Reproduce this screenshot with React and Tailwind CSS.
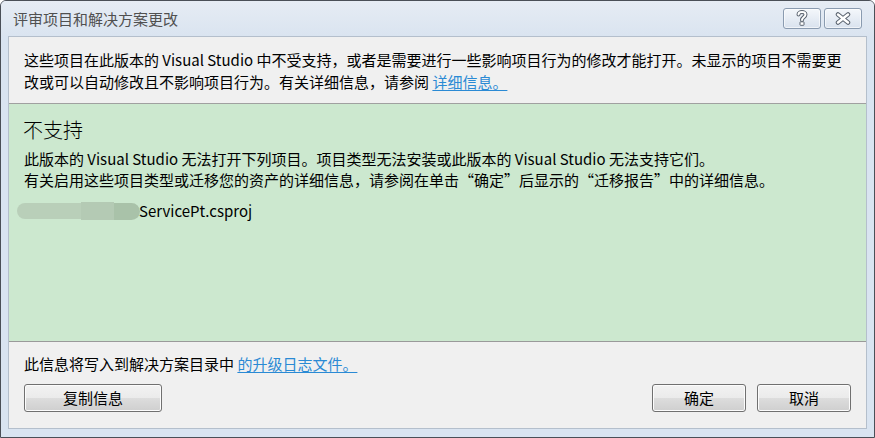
import { useState } from 'react';

const font = { fontFamily: '"Noto Sans CJK SC", "Noto Sans", sans-serif' };

function CaptionButton({ children }) {
  return (
    <div className="w-[38px] h-[21px] rounded-[3px] border border-[#8a9bb0] bg-gradient-to-b from-[#f4f7fb] to-[#d9e2ee] flex items-center justify-center shadow-[inset_0_0_0_1px_rgba(255,255,255,0.6)]">
      {children}
    </div>
  );
}

function WinButton({ label, className = '' }) {
  return (
    <button
      className={`h-[28px] rounded-[3px] border border-[#707070] text-[15px] text-black bg-[linear-gradient(#f2f2f2_0%,#ebebeb_50%,#dddddd_50%,#cfcfcf_100%)] shadow-[inset_0_0_0_1px_#fcfcfc] ${className}`}
      style={font}
    >
      {label}
    </button>
  );
}

export default function App() {
  const [copied, setCopied] = useState(false);

  return (
    <div className="w-[875px] h-[438px] bg-white" style={font} lang="zh-CN">
      <div className="w-full h-full flex flex-col rounded-t-[6px] border border-[#4a4f57] bg-[#d9e4f1] overflow-hidden">
        {/* title bar */}
        <div className="h-[35px] shrink-0 flex items-center justify-between pl-[12px] pr-[10px] bg-gradient-to-b from-[#e6ecf4] to-[#dae4f0]">
          <span className="text-[15px] text-[#505050] leading-none">评审项目和解决方案更改</span>
          <div className="flex gap-[3px] mt-[-1px] mr-[2px]">
            <CaptionButton>
              <svg width="12" height="16" viewBox="0 0 12 16">
                <path d="M2.5 4.5 C2.5 1.2 9.5 1.2 9.5 4.5 C9.5 7.2 6 7.2 6 10" fill="none" stroke="#5b6470" strokeWidth="4" strokeLinecap="round" />
                <path d="M2.5 4.5 C2.5 1.2 9.5 1.2 9.5 4.5 C9.5 7.2 6 7.2 6 10" fill="none" stroke="#fff" strokeWidth="2" strokeLinecap="round" />
                <rect x="4" y="11.8" width="4" height="3.5" rx="0.5" fill="#fff" stroke="#5b6470" strokeWidth="1" />
              </svg>
            </CaptionButton>
            <CaptionButton>
              <svg width="16" height="13" viewBox="0 0 16 13">
                <path d="M3 2.5 L13 10.5 M13 2.5 L3 10.5" stroke="#5b6470" strokeWidth="4.5" strokeLinecap="round" />
                <path d="M3 2.5 L13 10.5 M13 2.5 L3 10.5" stroke="#fff" strokeWidth="2.5" strokeLinecap="round" />
              </svg>
            </CaptionButton>
          </div>
        </div>

        {/* client area */}
        <div className="flex-1 flex flex-col mx-[7px] mb-[8px] border border-[#b4bfcc] bg-[#f0f0f0]">
          <div className="px-[15px] pt-[12px] pb-[10px] text-[15px] leading-[22px] text-black border-b border-[#a0a0a0]">
            <p>这些项目在此版本的 Visual Studio 中不受支持，或者是需要进行一些影响项目行为的修改才能打开。未显示的项目不需要更</p>
            <p>
              改或可以自动修改且不影响项目行为。有关详细信息，请参阅{' '}
              <a href="#" className="text-[#2a8ad4] underline underline-offset-2">详细信息。</a>
            </p>
          </div>

          <div className="flex-1 bg-[#cce8cf] px-[14px] pt-[12px] border-b border-[#9a9a9a]">
            <h2 className="text-[20px] leading-[28px] font-light text-black">不支持</h2>
            <div className="mt-[4px] px-[1px] text-[15px] leading-[21px] text-black">
              <p>此版本的 Visual Studio 无法打开下列项目。项目类型无法安装或此版本的 Visual Studio 无法支持它们。</p>
              <p>有关启用这些项目类型或迁移您的资产的详细信息，请参阅在单击“确定”后显示的“迁移报告”中的详细信息。</p>
            </div>
            <div className="mt-[10px] flex items-center h-[22px] text-[15px] text-black">
              <div className="flex items-center -ml-[6px] blur-[0.6px]">
                <div className="w-[64px] h-[16px] rounded-l-full bg-[#b9cfb9]" />
                <div className="w-[33px] h-[18px] bg-[#b4cab4]" />
                <div className="w-[26px] h-[17px] rounded-r-full bg-[#a9c2a9]" />
              </div>
              <span className="-ml-[1px]">ServicePt.csproj</span>
            </div>
          </div>

          <div className="h-[86px] shrink-0 px-[15px] pt-[11px] flex flex-col">
            <p className="text-[15px] leading-[22px] text-black">
              此信息将写入到解决方案目录中{' '}
              <a href="#" className="text-[#2a8ad4] underline underline-offset-2">的升级日志文件。</a>
            </p>
            <div className="mt-[9px] flex items-center">
              <WinButton label={copied ? '已复制' : '复制信息'} className="w-[138px]" />
              <div className="flex-1" />
              <WinButton label="确定" className="w-[94px]" />
              <WinButton label="取消" className="w-[94px] ml-[11px]" />
            </div>
          </div>
        </div>
      </div>
    </div>
  );
}
